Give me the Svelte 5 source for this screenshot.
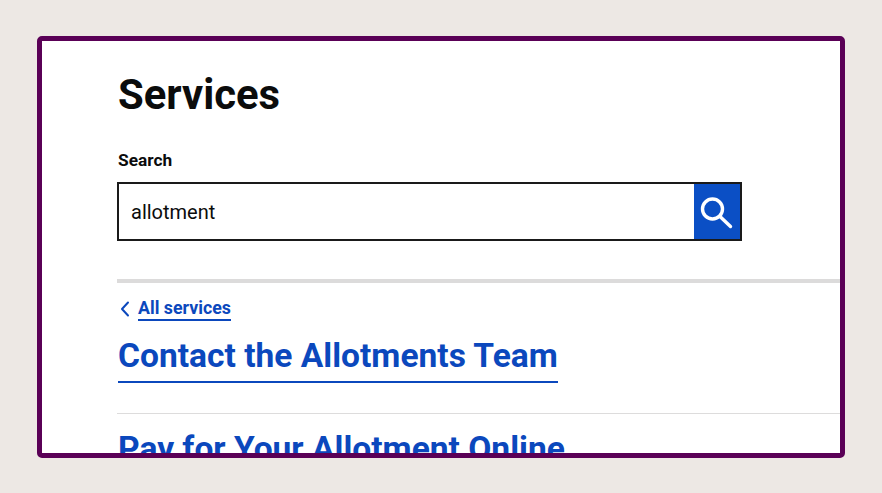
<script>
  let query = "allotment";

  const results = ["Contact the Allotments Team", "Pay for Your Allotment Online"];
</script>

<div class="frame">
  <h1>Services</h1>

  <label for="q">Search</label>
  <form class="search" onsubmit={(e) => e.preventDefault()}>
    <input id="q" type="text" bind:value={query} />
    <button type="submit" aria-label="Search">
      <svg width="34" height="34" viewBox="0 0 34 34" fill="none" stroke="#fff" stroke-width="3.4" stroke-linecap="round">
        <circle cx="12.5" cy="14" r="10" />
        <path d="M20 21.5 L30.5 31.5" />
      </svg>
    </button>
  </form>

  <hr class="thick" />

  <div class="back">
    <svg width="10" height="16" viewBox="0 0 10 16" fill="none" stroke="#0b48bd" stroke-width="2" stroke-linecap="round" stroke-linejoin="round">
      <path d="M8 1.5 L2 8 L8 14.5" />
    </svg>
    <a href="#top">All services</a>
  </div>

  {#each results as title, i}
    {#if i > 0}
      <hr class="thin" />
    {/if}
    <h2><a href="#top">{title}</a></h2>
  {/each}
</div>

<style>
  :global(body) {
    background: #ede8e4;
    font-family: Roboto, "Liberation Sans", sans-serif;
  }

  .frame {
    box-sizing: border-box;
    width: 808px;
    height: 422px;
    margin: 36px 0 0 37px;
    padding: 30px 0 0 76px;
    background: #fff;
    border: 5px solid #5a0056;
    border-radius: 5px;
    overflow: hidden;
    color: #0b0c0c;
  }

  h1 {
    margin: 0 0 33px;
    font-size: 41.8px;
    line-height: 47px;
    font-weight: 700;
  }

  label {
    display: block;
    margin-bottom: 12px;
    font-size: 17.3px;
    line-height: 19px;
    font-weight: 700;
  }

  .search {
    display: flex;
    box-sizing: border-box;
    width: 625px;
    height: 59px;
    margin-left: -1px;
    border: 2px solid #1a1a1a;
  }

  input {
    flex: 1;
    min-width: 0;
    padding: 0 12px;
    border: 0;
    outline: 0;
    font: 400 20px Roboto, sans-serif;
    color: #0b0c0c;
  }

  button {
    display: flex;
    align-items: center;
    justify-content: center;
    width: 46px;
    padding: 0;
    border: 0;
    background: #0b4fc5;
  }

  hr {
    margin: 0 0 0 -1px;
    border: 0;
  }

  .thick {
    height: 4px;
    margin-top: 38px;
    background: #dcdbdb;
  }

  .thin {
    height: 1px;
    margin-top: 30px;
    margin-bottom: 15px;
    background: #dddcdc;
  }

  .back {
    display: flex;
    align-items: center;
    gap: 8px;
    margin-top: 14px;
    margin-left: 2px;
    font-size: 17.8px;
    line-height: 21px;
    font-weight: 700;
  }

  .back a {
    color: #0b48bd;
    text-decoration: none;
    border-bottom: 2px solid #0b48bd;
    padding-bottom: 1px;
  }

  h2 {
    margin: 15px 0 0;
    font-size: 33.55px;
    line-height: 39px;
    font-weight: 700;
  }

  h2 a {
    display: inline-block;
    color: #0b48bd;
    text-decoration: none;
    border-bottom: 2px solid #0b48bd;
    padding-bottom: 6px;
  }
</style>
